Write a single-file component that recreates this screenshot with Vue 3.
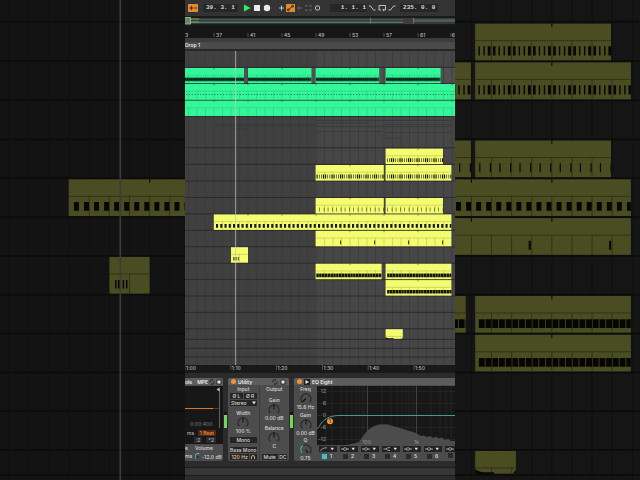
<script setup>
import { h, ref } from 'vue'

// Timeline geometry: bar 37 sits at x = 214 and one grid step is 8.5 units.
const ORIGIN = 214
const STEP = 8.5

const patterns = {
  mixed: { period: STEP, top: 9.6, height: 3.9, notes: [[0.56, 1.1], [2.96, 0.6], [5.07, 0.6], [6.9, 1.2]] },
  square: { period: STEP / 2, top: 9.6, height: 3.7, notes: [[2, 2.1]] },
  sparse: { period: STEP, top: 9.6, height: 3.8, notes: [[3.3, 0.5], [7.8, 0.5]] },
  rare: { period: 34, top: 9.6, height: 3.8, notes: [[24.2, 0.9]] },
  dense: { period: STEP / 3, top: 9.8, height: 3.7, notes: [[0.3, 2.5]] },
  drums: { period: STEP / 4, top: 9.4, height: 3.9, notes: [[0, 2.13]] },
  dots: { period: STEP / 3, top: 10.2, height: 0.8, notes: [[0.4, 1.1]] },
  trio: { period: 340, top: 9.8, height: 3.6, notes: [[19.4, 0.6], [20.6, 1.2], [22.6, 0.6], [24, 0.6]] },
  none: { period: 340, top: 0, height: 0, notes: [] }
}

function notePath(x, y, w, name) {
  const p = patterns[name]
  let d = ''
  for (let k = Math.floor((x - ORIGIN) / p.period); ORIGIN + k * p.period < x + w; k++) {
    for (const [offset, width] of p.notes) {
      const a = ORIGIN + k * p.period + offset
      const b = Math.min(a + width, x + w)
      if (a >= x && b > a) d += `M${a} ${y + p.top}H${b}V${y + p.top + p.height}H${a}Z`
    }
  }
  return d
}

function beadPath(x, y, w, name) {
  if (name !== 'drums') return ''
  let d = ''
  for (let a = x + 1; a < x + w - 1; a += STEP / 4) d += `M${a} ${y + 10.4}v1.8`
  return d
}

function gridPath(x, y, w, height) {
  let d = `M${x} ${y + 7.2}H${x + w}`
  for (let k = Math.ceil((x - ORIGIN) / STEP); ORIGIN + k * STEP < x + w; k++) {
    const gx = ORIGIN + k * STEP
    if (gx > x + 1) d += `M${gx} ${y + 7.2}V${y + height}`
  }
  return d
}

function markPath(x, y, w) {
  let d = ''
  for (let k = Math.ceil((x - ORIGIN) / 34); ORIGIN + k * 34 < x + w; k++) {
    const gx = ORIGIN + k * 34
    if (gx > x + 1) d += `M${gx} ${y}v1.4`
  }
  return d
}

const clips = [
  ['green', 180, 68, 64, 15.2, 'drums'],
  ['green', 248, 68, 63.5, 15.2, 'drums'],
  ['green', 315.6, 68, 63.6, 15.2, 'drums'],
  ['green', 385.6, 68, 55, 15.2, 'drums'],
  ['green', 180, 84, 280, 15.8, 'dots'],
  ['green', 180, 100.6, 280, 15.4, 'none'],
  ['yellow', 385.6, 148.6, 57.4, 15.5, 'mixed'],
  ['yellow', 315.6, 165, 68.2, 15.6, 'mixed'],
  ['yellow', 385.6, 165, 65.8, 15.6, 'mixed'],
  ['yellow', 315.6, 198, 68.2, 15.5, 'sparse'],
  ['yellow', 385.6, 198, 57.4, 15.5, 'sparse'],
  ['yellow', 213.8, 214.4, 237.6, 15.5, 'square'],
  ['yellow', 315.6, 230.8, 135.8, 15.5, 'rare'],
  ['yellow', 231, 247.2, 17, 15.5, 'trio'],
  ['yellow', 315.6, 263.7, 66, 15.5, 'dense'],
  ['yellow', 385.6, 263.7, 65.8, 15.5, 'dense'],
  ['yellow', 385.6, 280.1, 65.8, 15.5, 'dense'],
  ['yellow', 385.6, 329.2, 17.2, 9.6, 'none']
].map(([color, x, y, w, height, pattern]) => ({
  color, x, y, w, height,
  notes: notePath(x, y, w, pattern),
  beads: beadPath(x, y, w, pattern),
  grid: gridPath(x, y, w, height),
  marks: markPath(x, y, w)
}))

const lanes = [67.4, 83.6, 100.2, 116.4, 147.8, 164.4, 181, 197.5, 213.9, 230.4, 246.8, 263.2, 279.6, 296, 312.4, 328.8, 339.4, 348.4, 357]
const columns = Array.from({ length: 34 }, (_, i) => ORIGIN + (i - 4) * STEP)

const bars = [
  { label: '3', tick: 180, x: 185 },
  ...[37, 41, 45, 49, 53, 57, 61].map((n, i) => ({ label: String(n), tick: ORIGIN + i * 34, x: ORIGIN + 2 + i * 34 })),
  { label: '6', tick: 452, x: 452.6 }
]
bars[8].x = 451.8
bars[8].tick = 450.8
const times = ['1:00', '1:10', '1:20', '1:30', '1:40', '1:50'].map((t, i) => ({ t, x: 185 + i * 45.8 }))

const freqLines = [326, 332, 341, 347, 352, 356, 359, 362, 364, 367.5, 382, 391, 397, 402, 406, 409, 412, 414, 416.5, 431, 440, 446, 451]
const bands = [1, 2, 3, 4, 5, 6, 7]
const activeBands = ref([1])
const mode = ref('Stereo')

function Knob(props) {
  return h('label', { class: 'knob' }, [
    h('span', props.label),
    h('span', { class: 'dial' }, [
      h('svg', { viewBox: '0 0 14 12' }, [
        h('path', { class: 'knob-track', d: 'M3.2 10.2A5 5 0 1 1 10.8 10.2' }),
        props.arc ? h('path', { class: 'knob-arc', d: props.arc }) : null,
        h('path', { class: 'knob-hand', d: props.hand || 'M7 6.5V1.6' }),
        props.dot ? h('circle', { class: 'knob-dot', cx: 2, cy: 2, r: 0.8 }) : null
      ]),
      h('input', { type: 'range', 'aria-label': props.label })
    ]),
    h('output', props.value)
  ])
}
Knob.props = ['label', 'value', 'hand', 'arc', 'dot']
</script>

<template>
  <div class="stage">
    <svg class="side" viewBox="184.75 138.6 78.2 202.9" preserveAspectRatio="xMaxYMid slice" aria-hidden="true">
      <use href="#tracks" opacity="0.3" />
    </svg>

    <main class="daw">
      <header class="transport">
        <button class="tool on" aria-label="Follow">
          <svg viewBox="0 0 10 8"><path d="M1.5 4h4M3.5 2v4M6.5 4h2.4" /></svg>
        </button>
        <output class="counter position">39. 3. 1</output>
        <div class="group playback">
          <button aria-label="Play"><svg viewBox="0 0 10 8"><path class="play" d="M2 .4 8.6 4 2 7.6Z" /></svg></button>
          <button aria-label="Stop"><svg viewBox="0 0 10 8"><path class="solid" d="M2 1h6v6H2Z" /></svg></button>
          <button aria-label="Record"><svg viewBox="0 0 10 8"><circle class="solid" cx="5" cy="4" r="3.2" /></svg></button>
        </div>
        <div class="group edit">
          <button aria-label="Overdub"><svg viewBox="0 0 9 8"><path d="M4.5 1.5v5M2 4h5" /></svg></button>
          <button class="on" aria-label="Automation arm"><svg viewBox="0 0 9 8"><path d="M2.5 5.8 6.5 2.2" /><circle cx="2.3" cy="5.8" r="1" /><circle cx="6.6" cy="2.2" r="1" /></svg></button>
          <button class="dim" aria-label="Re-enable automation"><svg viewBox="0 0 9 8"><path d="M7 4H2.5M4 2.5 2.5 4 4 5.5" /></svg></button>
          <button class="dim" aria-label="Capture"><svg viewBox="0 0 9 8"><path d="M2 3V1.5h1.5M5.5 1.5H7V3M7 5v1.5H5.5M3.5 6.5H2V5" /></svg></button>
          <button aria-label="Session record"><svg viewBox="0 0 9 8"><circle cx="4.5" cy="4" r="2.2" /></svg></button>
        </div>
        <output class="counter start">1. 1. 1</output>
        <div class="group loop">
          <button aria-label="Punch in"><svg viewBox="0 0 10 8"><path d="M2 2h1.5L6.5 6H8.5" /></svg></button>
          <button aria-label="Loop"><svg viewBox="0 0 10 8"><path d="M4 6H2V1.5h6.5V6H6M7 4.8 5.8 6 7 7.2" /></svg></button>
          <button aria-label="Punch out"><svg viewBox="0 0 10 8"><path d="M1.5 6H3.5L6.5 2H8.5" /></svg></button>
        </div>
        <output class="counter">235. 0. 0</output>
      </header>

      <svg class="strip" viewBox="185 16 270 10" aria-hidden="true">
        <rect x="185" y="16" width="270" height="10" fill="#1b1b1b" />
        <rect x="185" y="18" width="270" height="6" fill="#343837" />
        <rect x="185" y="19" width="270" height="1" fill="#4a5a55" />
        <rect x="185" y="21.5" width="218" height="1.5" fill="#4c7565" />
        <rect x="403" y="18" width="10" height="6" fill="#3c3c3c" />
        <rect x="413" y="20" width="42" height="2" fill="#4a5c56" />
        <path d="M370.5 17.5v6M413.5 17.5v6.5" stroke="#8a8a8a" stroke-width=".6" />
        <path d="M190 19h9M190 22h9" stroke="#7f9a62" />
        <rect x="184" y="17.500" width="6.500" height="6.500" fill="#5f8a6c" stroke="#a9c3a0" stroke-width=".8" />
      </svg>

      <svg class="strip bar-ruler" viewBox="185 26 270 12">
        <g v-for="b in bars" :key="b.label">
          <path :d="`M${b.tick} 33v4`" />
          <text :x="b.x" y="36.5">{{ b.label }}</text>
        </g>
      </svg>

      <div class="locators"><span>Drop 1</span></div>

      <svg class="arrangement" viewBox="185 51 270 314" role="img" aria-label="Arrangement">
        <defs>
          <g id="tracks">
            <rect class="lane-fill" x="180" y="51" width="280" height="316" />
            <rect class="lane-late" x="315.5" y="51" width="145" height="316" />
            <rect class="loop-gap" x="180" y="67.5" width="280" height="16" />
            <path v-for="x in columns" :key="'c' + x" class="column" :d="`M${x} 51V367`" />
            <path class="faint" d="M214 125.3H316M232 129H248M316 120.5H451M316 123H370M386 124.5H451M316 126.5H451M316 131.5H381M386 132.5H451M386 138H402" />
            <path v-for="y in lanes" :key="'l' + y" class="lane" :d="`M180 ${y}H460`" />
            <g v-for="(c, i) in clips" :key="i" :class="c.color">
              <rect class="body" :x="c.x" :y="c.y" :width="c.w" :height="c.height" />
              <path class="clip-grid" :d="c.grid" />
              <path class="notes" :d="c.notes" />
              <path class="beads" :d="c.beads" />
              <path class="marks" :d="c.marks" />
            </g>
            <path class="tail" d="M385.6 337q1.500 1.200 3 1.200h5v.8h-8zM401.600 338.800l1.200-1.600v1.600z" />
            <path class="playhead" d="M235.6 51V367" />
          </g>
        </defs>
        <use href="#tracks" />
      </svg>

      <svg class="strip time-ruler" viewBox="185 365 270 8">
        <g v-for="t in times" :key="t.t">
          <path :d="`M${t.x} 365v5`" />
          <text :x="t.x + 1" y="369.5">{{ t.t }}</text>
        </g>
      </svg>

      <section class="devices">
        <article class="device delay">
          <div class="title"><span>ols</span><span class="push">MPE</span>
            <svg class="glyph" viewBox="0 0 6 6"><path d="M1 3.5V2q0-1 1-1h2l-.8-.8M5 2.5V4q0 1-1 1H2l.8.8" /></svg>
            <svg class="glyph" viewBox="0 0 6 6"><path class="solid" d="M1 1h4v4H1z" /></svg>
          </div>
          <div class="screen">
            <svg viewBox="0 0 38 42" preserveAspectRatio="none" aria-hidden="true">
              <path d="M0 22.5H28" stroke="#d9762f" />
              <path d="M28 22.5H34" stroke="#5b3a22" />
              <path d="M34.5 2V42" stroke="#777" stroke-width=".8" />
              <path d="M34.5 1.5v4L31.5 3.500z" fill="#bbb" />
              <text x="5" y="39.5" fill="#6e6e6e" font-size="5">0:00:400</text>
            </svg>
            <div class="beat"><span>ms</span><button class="amber">1 Beat</button></div>
            <div class="beat small"><button>:2</button><button>*2</button></div>
          </div>
          <div class="mix">
            <span>e</span><span>Volume</span>
            <span>ms</span><span class="level"><svg viewBox="0 0 8 8"><path d="M1.5 6.5A3 3 0 0 1 5 1.2" stroke="#47b5bd" /><path d="M4 4 2 6" stroke="#111" /></svg>-12.0 dB</span>
          </div>
        </article>

        <div class="meter"><i></i></div>

        <article class="device utility">
          <div class="title"><i class="led"></i><span>Utility</span>
            <svg class="glyph push" viewBox="0 0 6 6"><path d="M1 3.5V2q0-1 1-1h2l-.8-.8M5 2.5V4q0 1-1 1H2l.8.8" /></svg>
            <svg class="glyph" viewBox="0 0 6 6"><path class="solid" d="M1 1h4v4H1z" /></svg>
          </div>
          <div class="panes">
            <div class="pane">
              <div class="stack">
                <span class="caption">Input</span>
                <div class="pair"><button>Ø L</button><button>Ø R</button></div>
                <div class="drop">
                  <select v-model="mode" aria-label="Channel mode"><option>Stereo</option><option>Mid/Side</option></select>
                  <svg viewBox="0 0 4 4" aria-hidden="true"><path d="M0 .5h4L2 3.5z" /></svg>
                </div>
              </div>
              <Knob label="Width" value="100 %" />
              <button>Mono</button>
              <div class="stack">
                <button>Bass Mono</button>
                <div class="pair"><button class="warm">120 Hz</button>
                  <button class="ear" aria-label="Audition"><svg viewBox="0 0 6 6"><path d="M1.5 5V3a1.5 1.5 0 0 1 3 0v2" /></svg></button>
                </div>
              </div>
            </div>
            <div class="pane">
              <span class="caption">Output</span>
              <Knob label="Gain" value="0.00 dB" :dot="true" />
              <Knob label="Balance" value="C" />
              <div class="pair"><button class="wide">Mute</button><button>DC</button></div>
            </div>
          </div>
        </article>

        <div class="meter"><i></i></div>

        <article class="device eq">
          <div class="title"><i class="led"></i>
            <svg class="glyph" viewBox="0 0 6 6"><rect width="6" height="6" fill="#222" /><path class="white" d="M1.5 1v4L5 3z" /></svg>
            <span>EQ Eight</span>
          </div>
          <div class="eq-body">
            <div class="knobs">
              <Knob label="Freq" value="15.6 Hz" hand="M7 6.5 3.5 10" :dot="true" />
              <Knob label="Gain" value="0.00 dB" />
              <Knob label="Q" value="0.75" hand="M7 6.5 8.5 10" arc="M3.2 10.2A5 5 0 0 1 4 2.5" />
            </div>
            <div class="curve">
              <svg viewBox="317 386 138 59" preserveAspectRatio="xMinYMid slice" role="img" aria-label="EQ curve">
                <rect x="317" y="386" width="138" height="59" fill="#171717" />
                <path v-for="x in freqLines" :key="x" :d="`M${x} 386V445`" stroke="#2a2a2a" stroke-width=".7" />
                <path d="M317 391.5H455M317 403.5H455M317 415.5H455M317 427.5H455M317 439.5H455" stroke="#292929" stroke-width=".7" />
                <path d="M367.5 386V445M416.5 386V445" stroke="#484848" stroke-width=".8" />
                <path d="M346 445 354 443.5 359 442 363 436 368 430 373 426.5 379 424.5 387 424.3 393 426 400 428 408 430.5 416 433 421 436 424 435.5 427 437 430 436 433 438 436 436.7 439 438.5 442 437.5 445 440 448 439 451 441 455 441V445Z" fill="#4c4c4c" />
                <path d="M317 429C321 425 323 415.500 340 415.500H455" fill="none" stroke="#4fa6a4" stroke-width=".9" />
                <g class="scale">
                  <text x="326" y="393">12</text><text x="326" y="405.2">6</text><text x="326" y="417.2">0</text>
                  <text x="326" y="429.2">-6</text><text x="326" y="441">-12</text>
                  <text x="371" y="444">100</text><text x="419" y="444">1k</text>
                </g>
                <circle cx="330" cy="421.3" r="3" fill="#f39a2d" />
                <text x="328.8" y="423" fill="#3a1f00" font-size="5">1</text>
              </svg>
              <div class="bands">
                <div v-for="n in bands" :key="n" class="band">
                  <button :aria-label="`Filter type ${n}`">
                    <svg viewBox="0 0 17 6">
                      <path v-if="n === 1" d="M1.5 5Q2.5 1.8 8 1.8" />
                      <path v-else-if="n === 4" d="M1.5 3H4Q5 1.5 8 1.5M4 3Q5 4.5 8 4.5" />
                      <path v-else d="M1 3h1.5Q5 .2 7.5 3H9M2.5 3Q5 5.8 7.5 3" />
                      <path class="white" d="M11.5 1.8h3.5L13.2 4.3z" />
                    </svg>
                  </button>
                  <label><input v-model="activeBands" type="checkbox" :value="n" :aria-label="`Band ${n}`" /><span v-if="n < 7">{{ n }}</span></label>
                </div>
              </div>
            </div>
          </div>
        </article>
      </section>

      <footer class="status"><div></div></footer>
    </main>

    <svg class="side" viewBox="377.06 138.6 78.2 202.9" preserveAspectRatio="xMinYMid slice" aria-hidden="true">
      <use href="#tracks" opacity="0.3" />
    </svg>
  </div>
</template>

<style>
html, body { background: #000; }
body { margin: 0; }
.knob { display: flex; flex-direction: column; align-items: center; line-height: 6px; white-space: nowrap; }
.knob .dial { position: relative; width: 14px; height: 12px; }
.knob svg { display: block; width: 14px; height: 12px; fill: none; }
.knob input { position: absolute; inset: 0; width: 100%; height: 100%; margin: 0; opacity: 0; }
.knob-track { stroke: #242424; stroke-width: 1.2; }
.knob-arc { stroke: #49b8c4; stroke-width: 1.2; }
.knob-hand { stroke: #151515; stroke-width: 1.2; }
.knob-dot { fill: #b0452f; }
</style>

<style scoped>
.stage {
  display: grid;
  grid-template-columns: minmax(0, 185fr) minmax(0, 270fr) minmax(0, 185fr);
  min-height: 100vh;
  overflow: hidden;
  background: #000;
  color: #d8d8d8;
  font: 500 5px/6px Inter, "Liberation Sans", sans-serif;
}
.side { display: block; width: 100%; height: 100%; }
.daw { display: flex; flex-direction: column; background: #2b2b2b; overflow: hidden; }
button, select, input { font: inherit; color: inherit; margin: 0; }
button { padding: 0; border: 0; background: #252525; line-height: 6px; white-space: nowrap; }

.transport { display: flex; align-items: center; height: 16px; padding-left: 3px; background: #333; }
.transport button { display: block; width: 10px; height: 8px; background: none; }
.transport svg { display: block; width: 100%; height: 8px; fill: none; stroke: #cfcfcf; stroke-width: 0.9; }
.transport .on { background: #e08a33; }
.transport .on svg { stroke: #3a2208; }
.transport .dim svg { stroke: #6c6c6c; }
.transport .play { fill: #2ff069; stroke: none; }
.transport .solid { fill: #ececec; stroke: none; }
.group { display: flex; }
.playback { margin: 0 5px 0 4px; }
.edit { margin-right: 8px; }
.edit button { width: 9px; }
.loop { margin-right: 3px; }
.counter { padding: 0 3px; background: #262626; color: #d8d8d8; font: bold 6px/8px "Liberation Mono", monospace; white-space: pre; }
.position { margin-left: 5px; }
.start { padding: 0 1px 0 11px; }

.strip { display: block; width: 100%; flex: none; }
.bar-ruler { background: #161616; }
.bar-ruler text, .time-ruler text { fill: #b8b8b8; font-size: 5px; }
.bar-ruler path, .time-ruler path { stroke: #777; stroke-width: 0.6; }
.time-ruler { background: #191919; }
.locators { height: 7px; padding-top: 4px; border-bottom: 2px solid #272727; background: #3c3c3c; color: #e6e6e6; }
.locators span { display: block; line-height: 7px; font-weight: 600; background: #4b4b4b; }

.arrangement { display: block; width: 100%; flex: none; }
.lane-fill { fill: #404040; }
.lane-late { fill: #464646; }
.loop-gap { fill: #505050; }
.column { stroke: #363636; stroke-width: 0.6; }
.faint { stroke: #353535; stroke-width: 0.7; }
.lane { stroke: #282828; stroke-width: 0.9; }
.green .body { fill: #34f79a; }
.green .clip-grid { stroke: #22b871; stroke-width: 0.4; fill: none; }
.green .notes { fill: #0b5a36; }
.green .beads { stroke: #03150c; stroke-width: 1.4; }
.green .marks, .yellow .marks { stroke: #222; stroke-width: 0.5; }
.yellow .body { fill: #f4fd70; }
.yellow .clip-grid { stroke: #9da148; stroke-width: 0.4; fill: none; }
.yellow .notes, .tail { fill: #16170a; }
.playhead { stroke: #c4c4c4; stroke-width: 0.7; }

.devices { display: flex; gap: 1px; height: 83px; padding: 5px 0 3px; background: #2b2b2b; }
.device { display: flex; flex-direction: column; flex: none; overflow: hidden; background: #4c4c4c; border-radius: 2px; }
.title { display: flex; align-items: center; gap: 2px; height: 7px; padding: 0 3px; margin-bottom: 1px; flex: none; background: #5d5d5d; color: #e8e8e8; font-weight: 600; white-space: nowrap; }
.push { margin-left: auto; }
.glyph { display: block; width: 6px; height: 6px; flex: none; fill: none; stroke: #222; stroke-width: 0.9; }
.glyph .solid { fill: #e4e4e4; }
.white { fill: #e4e4e4; stroke: none; }
.led { width: 5px; height: 5px; flex: none; border-radius: 50%; background: #f09433; }

.delay { width: 38px; border-radius: 0 2px 2px 0; }
.delay .title { padding: 0 1px 0 0; gap: 1px; }
.screen { display: flex; flex-direction: column; height: 58px; background: #171717; }
.screen svg { display: block; width: 100%; height: 42px; flex: none; }
.beat { display: flex; justify-content: space-between; padding: 2px 7px 0 2px; color: #b0b0b0; }
.beat button { padding: 0 2px; background: #2a2a2a; }
.beat .amber { color: #ff8b3d; background: #4a2a15; }
.beat.small { justify-content: flex-end; gap: 4px; padding-top: 1px; }
.mix { display: grid; grid-template-columns: 9px 1fr; gap: 2px 1px; padding-top: 1px; }
.mix span { white-space: nowrap; }
.level { display: flex; align-items: center; }
.level svg { width: 7px; height: 7px; flex: none; fill: none; stroke-width: 1.2; }

.meter { display: flex; align-items: flex-end; width: 3px; height: 50px; flex: none; background: linear-gradient(#2b2b2b 34px, #161616 34px); }
.meter i { width: 100%; height: 13px; background: #72d85c; }

.utility { width: 61px; }
.panes { display: grid; grid-template-columns: 1fr 1fr; flex: 1; }
.pane { display: flex; flex-direction: column; justify-content: space-between; padding: 0 2px 1px; min-width: 0; }
.pane + .pane { border-left: 1px solid #3c3c3c; }
.caption { text-align: center; }
.stack { display: flex; flex-direction: column; gap: 1px; }
.pair { display: flex; gap: 1px; }
.pair button { flex: 1; }
.pair .warm { flex: 3; color: #e9c7a4; }
.pair .wide { flex: 2; }
.drop { display: grid; grid-template-columns: 1fr 4px; align-items: center; padding-right: 1px; background: #252525; }
.drop select { width: 100%; height: 6px; padding: 0 1px; border: 0; background: none; appearance: none; line-height: 6px; }
.drop svg { width: 4px; height: 4px; fill: #ddd; }
.ear svg { display: block; width: 6px; height: 6px; margin: auto; fill: none; stroke: #ccc; stroke-width: 0.8; }

.eq { flex: 1 1 0; min-width: 0; border-radius: 2px 0 0 2px; }
.eq-body { display: grid; grid-template-columns: 23px 1fr; flex: 1; min-height: 0; }
.knobs { display: flex; flex-direction: column; justify-content: space-between; }
.curve { display: flex; flex-direction: column; min-width: 0; overflow: hidden; }
.curve > svg { display: block; width: 100%; height: 59px; flex: none; }
.scale text { fill: #8d8d8d; font-size: 5px; text-anchor: end; }
.bands { display: flex; gap: 3px; padding: 1px 0 0 2px; }
.band { display: flex; flex-direction: column; gap: 1px; width: 18px; flex: none; }
.band button { height: 6px; background: #222; }
.band svg { display: block; width: 17px; height: 6px; fill: none; stroke: #b9b9b9; stroke-width: 0.8; }
.band label { display: flex; align-items: center; gap: 3px; padding-left: 3px; font-weight: 600; }
.band input { width: 5px; height: 5px; appearance: none; background: #2a2a2a; }
.band input:checked { background: #3fc1c5; }

.status { flex: 1; padding-top: 3px; background: #2b2b2b; }
.status div { height: 7px; border: solid #1c1c1c; border-width: 1px 0; background: #363636; }
</style>
